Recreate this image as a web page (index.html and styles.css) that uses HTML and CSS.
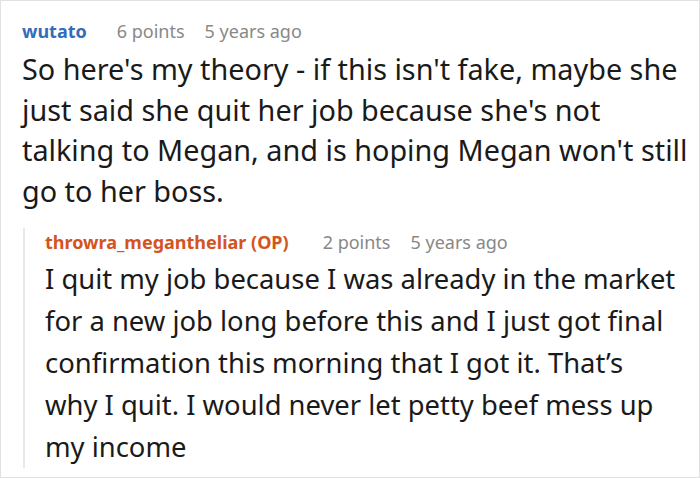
FILE: index.html
```html
<!DOCTYPE html>
<html lang="en">
<head>
    <meta charset="UTF-8">
    <meta name="viewport" content="width=device-width, initial-scale=1.0">
    <title>Comment thread</title>
    <link rel="stylesheet" href="styles.css">
</head>
<body>
    <div class="thread">
        <div class="comment">
            <div class="meta">
                <span class="author">wutato</span>
                <span class="info">6 points</span>
                <span class="info">5 years ago</span>
            </div>
            <p class="text">So here's my theory - if this isn't fake, maybe she just said she quit her job because she's not talking to Megan, and is hoping Megan won't still go to her boss.</p>

            <div class="reply">
                <div class="meta">
                    <span class="author op">throwra_megantheliar (OP)</span>
                    <span class="info">2 points</span>
                    <span class="info">5 years ago</span>
                </div>
                <p class="text">I quit my job because I was already in the market for a new job long before this and I just got final confirmation this morning that I got it. That’s why I quit. I would never let petty beef mess up my income</p>
            </div>
        </div>
    </div>
</body>
</html>
```

FILE: styles.css
```css
body {
    margin: 0;
    font-family: "Noto Sans", "Open Sans", sans-serif;
    background: #fff;
    color: #1a1a1a;
}
.thread {
    box-sizing: border-box;
    width: 700px;
    height: 478px;
    border: 1px solid #e2e2e2;
    padding: 16px 8px 0 21px;
}
.meta {
    display: flex;
    gap: 20px;
    font-size: 18px;
    line-height: 28px;
}
.author {
    font-weight: bold;
    color: #336cbb;
    margin-right: 10px;
}
.author.op {
    color: #d4541e;
    margin-right: 14px;
}
.info {
    color: #888;
}
.text {
    margin: 4px 0 0;
    font-size: 28.8px;
    line-height: 40.5px;
}
.reply {
    margin-top: 17px;
    margin-left: 1px;
    margin-right: 10px;
    border-left: 2px solid #e8e8e8;
    padding-left: 20px;
}
.reply .text {
    margin-top: 2px;
    font-size: 27.4px;
    line-height: 42px;
}
```
